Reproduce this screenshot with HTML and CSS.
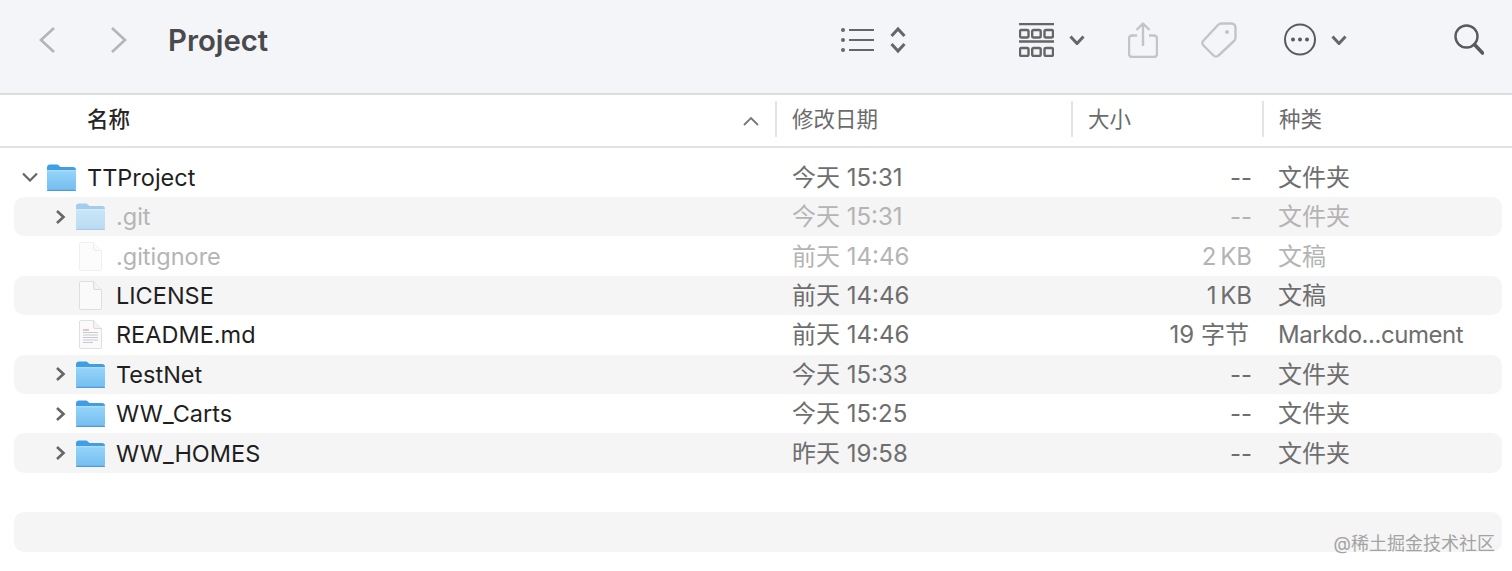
FILE: index.html
```html
<!DOCTYPE html>
<html lang="zh-CN">
<head>
<meta charset="utf-8">
<title>Project</title>
<link rel="stylesheet" href="styles.css">
</head>
<body>
<svg class="defs" width="0" height="0" aria-hidden="true">
  <defs>
    <linearGradient id="fb" x1="0" y1="0" x2="0" y2="1"><stop offset="0" stop-color="#94d4f9"/><stop offset="1" stop-color="#74bdf0"/></linearGradient>
    <symbol id="folder" viewBox="0 0 29 27">
      <path d="M0 3.500C0 1.600 1.200.5 3 .5h6.500c1.200 0 1.800.4 2.600 1.200l1.400 1.300H26c1.900 0 3 1.100 3 3V8H0z" fill="#3f9ee4"/>
      <path d="M0 6.500h29V24c0 1.900-1.100 3-3 3H3c-1.900 0-3-1.100-3-3z" fill="url(#fb)"/>
      <rect y="6.200" width="29" height="1" fill="#bfe6fc"/>
      <rect y="25.800" width="29" height="1.200" rx=".6" fill="#4f9cd8"/>
    </symbol>
    <symbol id="doc" viewBox="0 0 23 29">
      <path d="M1.500.5h13L22.500 8.500V27a1.500 1.500 0 0 1-1.500 1.500H2A1.500 1.500 0 0 1 .5 27V2A1.500 1.500 0 0 1 1.500.5z" fill="#fafafa" stroke="#dfdfdf"/>
      <path d="M14.500.5V7a1.500 1.500 0 0 0 1.500 1.500h6.500" fill="#f3f3f3" stroke="#dadada"/>
    </symbol>
  </defs>
</svg>

<header class="toolbar">
  <div class="nav">
    <svg width="16" height="26" viewBox="0 0 16 26"><path class="s-light" d="M15 1 2 13l13 12"/></svg>
    <svg width="16" height="26" viewBox="0 0 16 26"><path class="s-light" d="m1 1 13 12L1 25"/></svg>
  </div>
  <h1 class="title">Project</h1>
  <div class="tools">
    <svg class="t-list" width="34" height="24" viewBox="0 0 34 24"><g class="s-dark"><path d="M8 2h25M8 12h25M8 22h25"/></g><circle cx="2" cy="2" r="2" fill="#666"/><circle cx="2" cy="12" r="2" fill="#666"/><circle cx="2" cy="22" r="2" fill="#666"/></svg>
    <svg class="t-updown" width="16" height="28" viewBox="0 0 16 28"><path class="s-dark s-bold" d="m1.500 10 6.500-7 6.500 7M1.500 18 8 25l6.500-7"/></svg>
    <svg class="t-grid" width="35" height="34" viewBox="0 0 35 34"><g fill="none" stroke="#666" stroke-width="2.400"><path d="M0 1h35M0 18.500h35" /><rect x="1" y="7" width="8.500" height="7.500" rx="1.500"/><rect x="13.200" y="7" width="8.500" height="7.500" rx="1.500"/><rect x="25.500" y="7" width="8.500" height="7.500" rx="1.500"/><rect x="1" y="25" width="8.500" height="8" rx="1.500"/><rect x="13.200" y="25" width="8.500" height="8" rx="1.500"/><rect x="25.500" y="25" width="8.500" height="8" rx="1.500"/></g></svg>
    <svg class="t-chev" width="16" height="10" viewBox="0 0 16 10"><path class="s-dark s-bold" d="m1.500 1.500 6.500 7 6.500-7"/></svg>
    <svg class="t-share" width="30" height="36" viewBox="0 0 30 36"><path class="s-pale" d="M9 13.500H4a3 3 0 0 0-3 3V32a3 3 0 0 0 3 3h22a3 3 0 0 0 3-3V16.500a3 3 0 0 0-3-3h-5M15 24V2M8.500 8 15 1.500 21.500 8"/></svg>
    <svg class="t-tag" width="36" height="36" viewBox="0 0 36 36"><path class="s-pale" d="M20.500 1.500H30a4 4 0 0 1 4.500 4.500v9.500c0 1.500-.5 2.500-1.500 3.500L17.500 33.500c-1.500 1.500-3.500 1.500-5 0L2.500 23.500c-1.500-1.500-1.500-3.500 0-5L17 3c1-1 2-1.500 3.500-1.500z"/><circle cx="26" cy="10" r="2" fill="#c4c4c4"/></svg>
    <svg class="t-more" width="32" height="33" viewBox="0 0 32 33"><circle cx="16" cy="16.500" r="15" fill="none" stroke="#5a5a5a" stroke-width="2"/><circle cx="9" cy="16.500" r="2" fill="#5a5a5a"/><circle cx="16" cy="16.500" r="2" fill="#5a5a5a"/><circle cx="23" cy="16.500" r="2" fill="#5a5a5a"/></svg>
    <svg class="t-chev" width="16" height="10" viewBox="0 0 16 10"><path class="s-dark s-bold" d="m1.500 1.500 6.500 7 6.500-7"/></svg>
    <svg class="t-search" width="30" height="31" viewBox="0 0 30 31"><circle cx="12.500" cy="12.500" r="11" fill="none" stroke="#5a5a5a" stroke-width="2.400"/><path d="m20.500 20.500 8 8.500" fill="none" stroke="#5a5a5a" stroke-width="3.600" stroke-linecap="round"/></svg>
  </div>
</header>

<div class="columns">
  <div class="col col-name">名称
    <svg class="sort" width="16" height="10" viewBox="0 0 16 10"><path d="m1 9 7-7 7 7" fill="none" stroke="#777" stroke-width="1.800"/></svg>
  </div>
  <div class="col col-line">修改日期</div>
  <div class="col col-line">大小</div>
  <div class="col col-line">种类</div>
</div>

<main class="list">
  <div class="row">
    <div class="name">
      <svg class="toggle" width="16" height="10" viewBox="0 0 16 10"><path d="m1 1.500 7 7 7-7" fill="none" stroke="#666" stroke-width="2.200"/></svg>
      <svg class="icon" width="29" height="27"><use href="#folder"/></svg>
      <span>TTProject</span>
    </div>
    <div class="date">今天 15:31</div><div class="size">--</div><div class="kind">文件夹</div>
  </div>
  <div class="row stripe dim">
    <div class="name sub">
      <svg class="toggle" width="16" height="14" viewBox="0 0 16 14"><path d="m6 1 6.500 6L6 13" fill="none" stroke="#666" stroke-width="2.600"/></svg>
      <svg class="icon faded" width="29" height="27"><use href="#folder"/></svg>
      <span>.git</span>
    </div>
    <div class="date">今天 15:31</div><div class="size">--</div><div class="kind">文件夹</div>
  </div>
  <div class="row dim">
    <div class="name sub">
      <span class="toggle-slot"></span>
      <svg class="icon icon-doc faded" width="23" height="29"><use href="#doc"/></svg>
      <span>.gitignore</span>
    </div>
    <div class="date">前天 14:46</div><div class="size tight">2 KB</div><div class="kind">文稿</div>
  </div>
  <div class="row stripe">
    <div class="name sub">
      <span class="toggle-slot"></span>
      <svg class="icon icon-doc" width="23" height="29"><use href="#doc"/></svg>
      <span>LICENSE</span>
    </div>
    <div class="date">前天 14:46</div><div class="size tight">1 KB</div><div class="kind">文稿</div>
  </div>
  <div class="row">
    <div class="name sub">
      <span class="toggle-slot"></span>
      <svg class="icon icon-doc" width="23" height="29" viewBox="0 0 23 29"><use href="#doc"/><path d="M4 10h6" stroke="#e0a0a0" stroke-width="1.200"/><path d="M4 12.500h15M4 15h15M4 17.500h15M4 20h15M4 22.500h10" stroke="#c6c9d0" stroke-width="1.200"/></svg>
      <span>README.md</span>
    </div>
    <div class="date">前天 14:46</div><div class="size inset">19 字节</div><div class="kind narrow">Markdo...cument</div>
  </div>
  <div class="row stripe">
    <div class="name sub">
      <svg class="toggle" width="16" height="14" viewBox="0 0 16 14"><path d="m6 1 6.500 6L6 13" fill="none" stroke="#666" stroke-width="2.600"/></svg>
      <svg class="icon" width="29" height="27"><use href="#folder"/></svg>
      <span>TestNet</span>
    </div>
    <div class="date">今天 15:33</div><div class="size">--</div><div class="kind">文件夹</div>
  </div>
  <div class="row">
    <div class="name sub">
      <svg class="toggle" width="16" height="14" viewBox="0 0 16 14"><path d="m6 1 6.500 6L6 13" fill="none" stroke="#666" stroke-width="2.600"/></svg>
      <svg class="icon" width="29" height="27"><use href="#folder"/></svg>
      <span>WW_Carts</span>
    </div>
    <div class="date">今天 15:25</div><div class="size">--</div><div class="kind">文件夹</div>
  </div>
  <div class="row stripe">
    <div class="name sub">
      <svg class="toggle" width="16" height="14" viewBox="0 0 16 14"><path d="m6 1 6.500 6L6 13" fill="none" stroke="#666" stroke-width="2.600"/></svg>
      <svg class="icon" width="29" height="27"><use href="#folder"/></svg>
      <span>WW_HOMES</span>
    </div>
    <div class="date">昨天 19:58</div><div class="size">--</div><div class="kind">文件夹</div>
  </div>
  <div class="row"></div>
  <div class="row stripe"></div>
</main>

<div class="watermark">@稀土掘金技术社区</div>
</body>
</html>
```
FILE: styles.css
```css
* { box-sizing: border-box; }

html, body {
  margin: 0;
  height: 571px;
  overflow: hidden;
  background: #fff;
  font-family: Inter, "Noto Sans CJK SC", sans-serif;
}

body { position: relative; }

.defs { position: absolute; }

svg { display: block; flex: none; }

.toolbar {
  display: flex;
  align-items: center;
  height: 95px;
  padding: 0 28px 14px 39px;
  background: #f4f5f9;
  border-bottom: 2px solid #dddddf;
}

.nav { display: flex; gap: 56px; }

.title {
  margin: 2px 0 0 41px;
  font-size: 29.300px;
  font-weight: 600;
  color: #4a4a4c;
}

.tools {
  display: flex;
  align-items: center;
  margin-left: auto;
}

.t-updown { margin-left: 15px; }
.t-grid { margin-left: 113px; }
.t-chev { margin-left: 15px; }
.t-share { margin-left: 43px; }
.t-tag { margin-left: 43px; }
.t-more { margin-left: 47px; }
.t-search { margin-left: 107px; }

.s-light, .s-dark, .s-pale {
  fill: none;
}
.s-light { stroke: #b5b5b7; stroke-width: 2.600; }
.s-dark { stroke: #666; stroke-width: 2.200; }
.s-bold { stroke-width: 3; }
.s-pale { stroke: #c4c4c6; stroke-width: 2.400; stroke-linejoin: round; }

.columns {
  display: grid;
  grid-template-columns: 775px 296px 191px 1fr;
  align-items: center;
  height: 53px;
  padding-bottom: 3px;
  border-bottom: 2px solid #e2e2e2;
  font-size: 21.500px;
  line-height: 36px;
  color: #6b6b6b;
}

.col {
  display: flex;
  align-items: center;
  height: 36px;
}

.col-name {
  justify-content: space-between;
  padding: 0 16px 0 87px;
  color: #262626;
  font-weight: 500;
}

.col-line {
  padding-left: 15px;
  border-left: 2px solid #e4e4e4;
}

.sort { margin-top: 4px; }

.list {
  padding: 9.600px 10px 0 14px;
}

.row {
  display: grid;
  grid-template-columns: 778px 300px 160px 1fr;
  align-items: center;
  height: 39.400px;
  line-height: 39px;
  border-radius: 10px;
  font-size: 24px;
  color: #6e6e6e;
}

.stripe { background: #f5f5f5; }

.name {
  display: flex;
  align-items: center;
  padding-left: 8px;
  font-size: 23.500px;
  color: #1f1f1f;
}

.name.sub { padding-left: 37px; }

.toggle, .toggle-slot { width: 16px; }
.toggle-slot { flex: none; }

.icon { margin: 0 11px 0 9px; }

.icon-doc { margin: 0 14px 0 12px; }

.size { text-align: right; }
.size.tight { word-spacing: -3px; }
.size.inset { padding-right: 3px; }

.kind { padding-left: 26px; }
.kind.narrow { letter-spacing: -0.450px; }

.dim, .dim .name { color: #b4b4b4; }

.faded { opacity: 0.45; }

.watermark {
  position: absolute;
  right: 17px;
  bottom: 16px;
  font-size: 18px;
  color: #a3a3a3;
}
```
